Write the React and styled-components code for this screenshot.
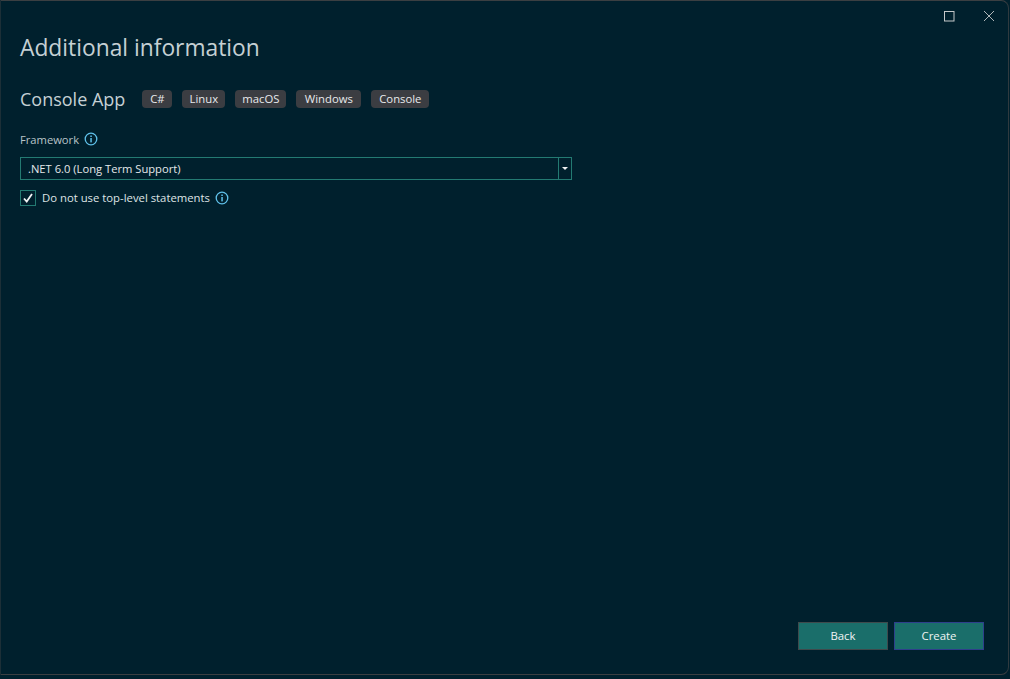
import React from "react";
import styled, { createGlobalStyle } from "styled-components";

const Global = createGlobalStyle`
  html, body { margin: 0; padding: 0; background: #00202d; }
  body { font-family: "Open Sans", "Noto Sans", "Liberation Sans", sans-serif; }
`;

const Page = styled.div`
  width: 1010px;
  height: 679px;
  background: #00202d;
  overflow: hidden;
`;

const Win = styled.div`
  box-sizing: border-box;
  width: 1009px;
  height: 675px;
  background: #00202d;
  border: 1px solid #3b3f42;
  border-left-color: #1c2f37;
  border-right-color: #2f3a3f;
  border-radius: 0 8px 8px 0;
  display: flex;
  flex-direction: column;
  padding: 0 24px 24px 19px;
`;

const TitleBar = styled.div`
  display: flex;
  justify-content: flex-end;
  align-items: center;
  gap: 24px;
  height: 29px;
  margin-right: -13px;
`;

const WinBtn = styled.svg`
  width: 16px;
  height: 16px;
  display: block;
  color: #c4c8ca;
`;

const Title = styled.h1`
  margin: 0;
  height: 36px;
  font-size: 22.8px;
  line-height: 36px;
  font-weight: 400;
  color: #c5d0d4;
`;

const SubRow = styled.div`
  display: flex;
  align-items: center;
  margin-top: 16px;
  height: 33px;
`;

const Sub = styled.h2`
  margin: 0 17px 0 0;
  font-size: 18px;
  font-weight: 400;
  color: #c5d0d4;
  white-space: nowrap;
`;

const Chips = styled.div`
  display: flex;
  gap: 10px;
`;

const Chip = styled.span`
  box-sizing: border-box;
  height: 18px;
  width: ${(p) => p.$w}px;
  display: flex;
  align-items: center;
  justify-content: center;
  background: #3b3d42;
  border-radius: 4px;
  color: #e8eaec;
  font-size: 11.3px;
`;

const LabelRow = styled.div`
  display: flex;
  align-items: center;
  gap: 5px;
  margin-top: 14px;
  height: 20px;
`;

const Label = styled.label`
  font-size: 11.2px;
  color: #b9c4c8;
`;

const Select = styled.div`
  box-sizing: border-box;
  display: flex;
  width: 552px;
  height: 23px;
  margin-top: 8px;
  border: 1px solid #237a72;
`;

const SelectValue = styled.div`
  flex: 1;
  padding-left: 7px;
  font-size: 11.2px;
  line-height: 21px;
  color: #e4e8ea;
  border-right: 1px solid #237a72;
`;

const Caret = styled.div`
  width: 12px;
  display: flex;
  align-items: center;
  justify-content: center;
  &::after {
    content: "";
    border-left: 3px solid transparent;
    border-right: 3px solid transparent;
    border-top: 3px solid #f0f2f3;
  }
`;

const CheckRow = styled.div`
  display: flex;
  align-items: center;
  margin-top: 9px;
  height: 17px;
`;

const Box = styled.div`
  box-sizing: border-box;
  width: 16px;
  height: 16px;
  border: 1px solid #237a72;
  display: flex;
  align-items: center;
  justify-content: center;
  margin-right: 6px;
`;

const CheckText = styled.span`
  font-size: 11.32px;
  color: #dfe4e6;
  margin-right: 5px;
`;

const Footer = styled.div`
  margin-top: auto;
  display: flex;
  justify-content: flex-end;
  gap: 6px;
`;

const Btn = styled.button`
  box-sizing: border-box;
  width: 90px;
  height: 28px;
  padding: 0 0 2px;
  background: #1a6e6a;
  border: 1px solid ${(p) => (p.$primary ? "#2e3f8c" : "#3f4a4c")};
  color: #f0f4f4;
  font-family: inherit;
  font-size: 11.4px;
`;

const Info = () => (
  <svg width="14" height="14" viewBox="0 0 14 14" fill="none">
    <circle cx="7" cy="7" r="5.8" stroke="#5fc1ea" strokeWidth="1.3" />
    <rect x="6.3" y="6" width="1.5" height="4.4" fill="#5fc1ea" />
    <rect x="6.3" y="3.5" width="1.5" height="1.5" fill="#5fc1ea" />
  </svg>
);

const tags = [
  ["C#", 30],
  ["Linux", 43],
  ["macOS", 51],
  ["Windows", 65],
  ["Console", 58],
];

export default function App() {
  return (
    <Page>
      <Global />
      <Win>
        <TitleBar>
          <WinBtn viewBox="0 0 16 16" fill="none">
            <rect x="3.5" y="3.5" width="9.5" height="9.5" stroke="currentColor" />
          </WinBtn>
          <WinBtn viewBox="0 0 16 16" fill="none">
            <path d="M3 3 L13 13 M13 3 L3 13" stroke="currentColor" strokeWidth="0.9" />
          </WinBtn>
        </TitleBar>
        <Title>Additional information</Title>
        <SubRow>
          <Sub>Console App</Sub>
          <Chips>
            {tags.map(([t, w]) => (
              <Chip key={t} $w={w}>{t}</Chip>
            ))}
          </Chips>
        </SubRow>
        <LabelRow>
          <Label>Framework</Label>
          <Info />
        </LabelRow>
        <Select>
          <SelectValue>.NET 6.0 (Long Term Support)</SelectValue>
          <Caret />
        </Select>
        <CheckRow>
          <Box>
            <svg width="12" height="12" viewBox="0 0 12 12" fill="none">
              <path d="M2 6.5 L4.7 9.5 L10 2" stroke="#f2f4f5" strokeWidth="1.8" />
            </svg>
          </Box>
          <CheckText>Do not use top-level statements</CheckText>
          <Info />
        </CheckRow>
        <Footer>
          <Btn>Back</Btn>
          <Btn $primary>Create</Btn>
        </Footer>
      </Win>
    </Page>
  );
}
